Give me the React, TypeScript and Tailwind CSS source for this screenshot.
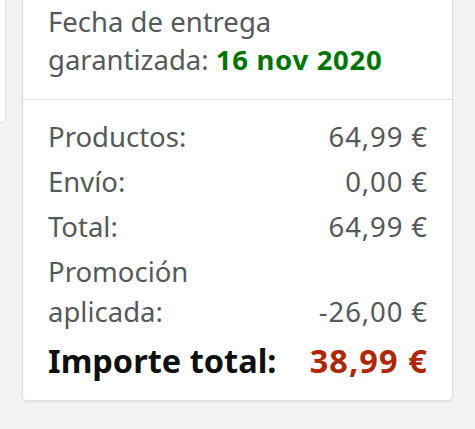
import React from 'react';

type Line = { label: string; value: string };

const lines: Line[] = [
  { label: 'Productos:', value: '64,99 €' },
  { label: 'Envío:', value: '0,00 €' },
  { label: 'Total:', value: '64,99 €' },
  { label: 'Promoción aplicada:', value: '-26,00 €' },
];

// Order summary row
const SummaryRow: React.FC<Line> = ({ label, value }) => (
  <div className="flex items-end justify-between gap-4 mt-[5px] first:mt-0">
    <div className="max-w-[170px] leading-[40px]">{label}</div>
    <div className="leading-[40px] whitespace-nowrap tracking-[0.9px] mr-[-1px]">{value}</div>
  </div>
);

const App: React.FC = () => {
  return (
    <div
      className="w-[475px] h-[429px] bg-[#f2f2f2] flex items-start overflow-hidden"
      style={{ fontFamily: '"Noto Sans", "Open Sans", sans-serif' }}
    >
      {/* card peeking from the left */}
      <div className="w-[6px] h-[123px] bg-white border-r border-b border-[#dcdcdc] rounded-br-[5px] shrink-0" />

      <div className="ml-[16px] w-[431px] bg-white border-x border-b border-[#e0e0e0] rounded-b-[5px] shadow-[0_1px_2px_rgba(0,0,0,0.08)]">
        <div className="pt-[3px] pb-[20px] px-[25px] text-[27.5px] leading-[38px] text-[#565959]">
          Fecha de entrega
          <br />
          garantizada:{' '}
          <span className="font-bold text-[#007600] tracking-[0.7px]">16 nov 2020</span>
        </div>

        <div className="h-px bg-[#dddddd]" />

        <div className="pt-[17px] pb-[16px] px-[25px] text-[27.5px] text-[#565959]">
          {lines.map((line) => (
            <SummaryRow key={line.label} {...line} />
          ))}
          <div className="flex items-end justify-between mt-[6px] text-[32.5px] leading-[46px] font-bold">
            <div className="text-[#0f1111]">Importe total:</div>
            <div className="text-[#b12704] tracking-[1.1px] mr-[-1px]">38,99 €</div>
          </div>
        </div>
      </div>
    </div>
  );
};

export default App;
